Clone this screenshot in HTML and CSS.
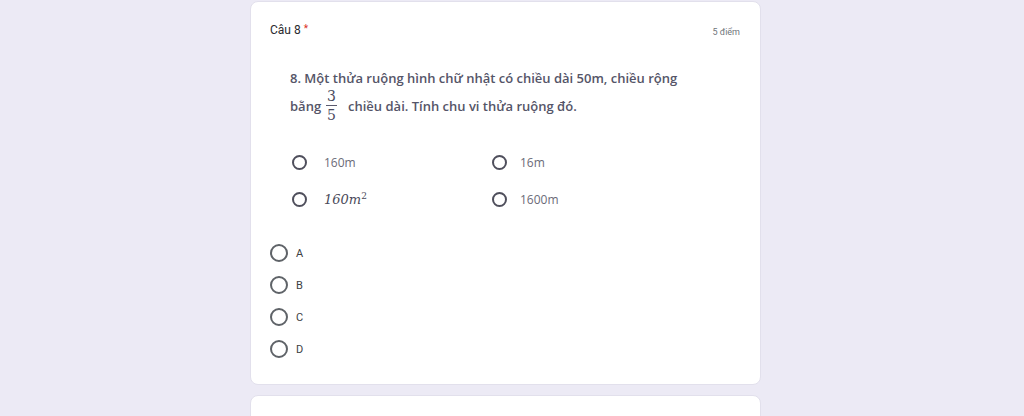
FILE: index.html
```html
<!DOCTYPE html>
<html lang="vi">
<head>
    <meta charset="UTF-8">
    <meta name="viewport" content="width=device-width, initial-scale=1.0">
    <title>Câu 8</title>
    <link rel="stylesheet" href="styles.css">
</head>
<body>
    <div class="page">
        <div class="card">
            <div class="card-head">
                <div class="title">Câu 8 <span class="req">*</span></div>
                <div class="points">5 điểm</div>
            </div>

            <div class="question">
                <p class="q-line">8. Một thửa ruộng hình chữ nhật có chiều dài 50m, chiều rộng</p>
                <p class="q-line q-frac-line">bằng
                    <span class="frac"><span class="num">3</span><span class="den">5</span></span>
                    <span class="after">chiều dài. Tính chu vi thửa ruộng đó.</span>
                </p>

                <div class="answers">
                    <div class="ans"><span class="ring"></span><span>160m</span></div>
                    <div class="ans"><span class="ring"></span><span>16m</span></div>
                    <div class="ans"><span class="ring"></span><span class="math">160<i>m</i><sup>2</sup></span></div>
                    <div class="ans"><span class="ring"></span><span>1600m</span></div>
                </div>
            </div>

            <div class="choices">
                <label class="choice"><span class="radio"></span>A</label>
                <label class="choice"><span class="radio"></span>B</label>
                <label class="choice"><span class="radio"></span>C</label>
                <label class="choice"><span class="radio"></span>D</label>
            </div>
        </div>

        <div class="card next"></div>
    </div>
</body>
</html>
```

FILE: styles.css
```css
body {
    margin: 0;
    padding: 0;
    background-color: #eceaf5;
    font-family: Roboto, "Liberation Sans", Arial, sans-serif;
    overflow: hidden;
}

.page {
    width: 511px;
    margin-left: 250px;
    padding-top: 1px;
}

.card {
    background: #fff;
    border: 1px solid #e2e0ec;
    border-radius: 8px;
    padding: 18px 20px 26px 19px;
}

.card.next {
    margin-top: 10px;
    height: 60px;
}

.card-head {
    display: flex;
    justify-content: space-between;
    align-items: center;
    height: 20px;
}

.title {
    font-size: 12px;
    color: #2a2a2e;
}

.req {
    color: #d93025;
    font-size: 10px;
    vertical-align: 2px;
}

.points {
    font-size: 9px;
    color: #70757a;
    padding-top: 3px;
}

.question {
    padding: 29px 0 0 20px;
    font-family: "Open Sans", "Noto Sans", sans-serif;
    color: #555568;
}

.q-line {
    margin: 0;
    font-size: 13px;
    font-weight: 600;
    line-height: 18px;
}

.q-frac-line {
    display: flex;
    align-items: center;
    margin-top: 1px;
}

.frac {
    display: inline-flex;
    flex-direction: column;
    align-items: center;
    margin: 0 11px 0 5px;
    font-family: "DejaVu Serif", "Liberation Serif", serif;
    font-weight: normal;
    font-size: 14px;
    line-height: 16px;
    color: #4a4a5e;
}

.frac .num {
    border-bottom: 1px solid #5a5a6e;
    padding: 0 1px 1px;
}

.frac .den {
    padding-top: 1px;
}

.answers {
    display: grid;
    grid-template-columns: 200px 200px;
    row-gap: 19px;
    padding: 30px 0 0 2px;
}

.ans {
    display: flex;
    align-items: center;
    gap: 17px;
    font-size: 12px;
    color: #6b6b78;
    height: 18px;
}

.ans:nth-child(even) {
    gap: 13px;
}

.ring {
    width: 11px;
    height: 11px;
    border: 2px solid #4f4f5c;
    border-radius: 50%;
}

.math {
    font-family: "DejaVu Serif", "Liberation Serif", serif;
    font-size: 13px;
    color: #4a4a5a;
    font-style: italic;
}

.math sup {
    font-size: 9px;
    font-style: normal;
}

.choices {
    display: flex;
    flex-direction: column;
    gap: 14px;
    padding-top: 36px;
}

.choice {
    display: flex;
    align-items: center;
    gap: 8px;
    font-size: 11px;
    color: #3c4043;
    height: 18px;
}

.radio {
    width: 14px;
    height: 14px;
    border: 2px solid #5f6368;
    border-radius: 50%;
}
```
